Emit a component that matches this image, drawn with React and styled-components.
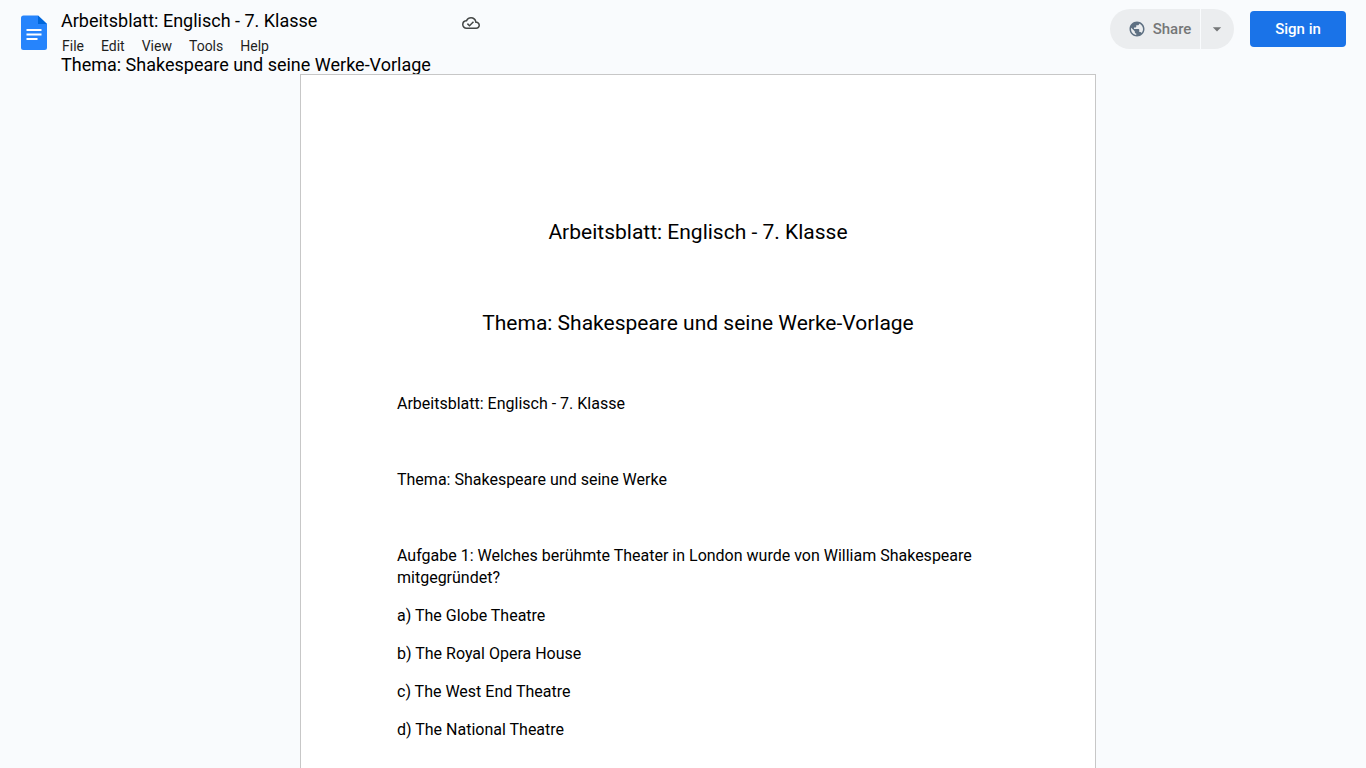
import React from 'react';
import styled, { createGlobalStyle } from 'styled-components';
import { MdArrowDropDown, MdOutlineCloudDone, MdPublic } from 'react-icons/md';

const GlobalStyle = createGlobalStyle`
* {
  box-sizing: border-box;
}
body {
  margin: 0;
  background-color: #f9fbfd;
  font-family: Roboto, sans-serif;
  color: #000;
}
`;
const Container = styled.div`
height: 100vh;
display: flex;
flex-direction: column;
overflow: hidden;
`;
const Header = styled.header`
display: flex;
align-items: flex-start;
flex: none;
height: 74px;
padding: 0 20px;
overflow: hidden;
`;
const Logo = styled.a`
display: flex;
flex: none;
width: 41px;
padding: 15px 0 0 1px;
`;
const TitleArea = styled.div`
flex: 1;
min-width: 0;
padding-top: 10px;
`;
const TitleRow = styled.div`
display: flex;
align-items: flex-end;
height: 22px;
color: #444746;
`;
const DocTitle = styled.h1`
width: 401px;
margin: 0;
font-size: 18px;
font-weight: 400;
line-height: 22px;
color: #000;
`;
const DocSubtitle = styled.p`
margin: 0;
font-size: 18px;
line-height: 22px;
white-space: nowrap;
`;
const Menu = styled.nav`
display: flex;
gap: 17px;
padding: 6px 1px 0;
`;
const MenuButton = styled.button`
padding: 0;
border: none;
background: none;
font-family: inherit;
font-size: 14px;
line-height: 16px;
color: #1f1f1f;
cursor: pointer;
`;
const Actions = styled.div`
display: flex;
align-items: center;
gap: 16px;
padding-top: 9px;
`;
const ShareGroup = styled.div`
display: flex;
gap: 1px;
height: 40px;
`;
const ShareButton = styled.button`
display: flex;
align-items: center;
justify-content: center;
gap: 7px;
width: ${(props) => (props.$arrow ? '33px' : '90px')};
padding: ${(props) => (props.$arrow ? '0 2px 0 0' : '0 0 0 9px')};
border: none;
border-radius: ${(props) => (props.$arrow ? '0 20px 20px 0' : '20px 0 0 20px')};
background-color: #ebedef;
font-family: inherit;
font-size: 15px;
font-weight: 500;
color: #757778;
`;
const GlobeIcon = styled(MdPublic)`
flex: none;
color: #5f7183;
`;
const SignIn = styled.a`
width: 96px;
border-radius: 4px;
background-color: #1a73e8;
font-size: 15px;
font-weight: 500;
line-height: 36px;
text-align: center;
text-decoration: none;
color: #fff;
`;
const Canvas = styled.main`
flex: 1;
min-height: 0;
padding-left: 30px;
overflow: hidden;
`;
const Page = styled.article`
max-width: 796px;
min-height: 100vh;
margin: 0 auto;
padding: 142px 96px 96px;
border: 1px solid #c7c7c7;
background-color: #fff;
`;
const Heading = styled.h2`
margin: 0 0 61px;
font-size: 21px;
font-weight: 400;
line-height: 30px;
text-align: center;

&:nth-of-type(2) {
  margin-bottom: 55px;
}
`;
const Paragraph = styled.p`
min-height: 22px;
margin: 0 0 16px;
font-size: 16px;
line-height: 22px;
`;

const menuItems = ['File', 'Edit', 'View', 'Tools', 'Help'];

// empty strings are the blank lines of the document
const paragraphs = [
  'Arbeitsblatt: Englisch - 7. Klasse',
  '',
  'Thema: Shakespeare und seine Werke',
  '',
  'Aufgabe 1: Welches berühmte Theater in London wurde von William Shakespeare mitgegründet?',
  'a) The Globe Theatre',
  'b) The Royal Opera House',
  'c) The West End Theatre',
  'd) The National Theatre',
];

const DocsLogo = () => (
  <svg width="26" height="35" viewBox="0 0 26 35" aria-hidden="true">
    <path d="M2.5 .5H17L26 9v23.5a2.500 2.500 0 0 1-2.500 2.500h-21A2.500 2.500 0 0 1 0 32.500V3A2.500 2.500 0 0 1 2.500 .5z" fill="#2684fc" />
    <path d="M17 .5L26 9H17z" fill="#0066da" />
    <path d="M5.500 14h15v2h-15zM5.500 18.500h15v2h-15zM5.500 23h11v2h-11z" fill="#fff" />
  </svg>
);

const App = () => {
  return (
    <>
      <GlobalStyle />
      <Container>
        <Header>
          <Logo href="#" aria-label="Docs home">
            <DocsLogo />
          </Logo>
          <TitleArea>
            <TitleRow>
              <DocTitle>Arbeitsblatt: Englisch - 7. Klasse</DocTitle>
              <MdOutlineCloudDone size={18} />
            </TitleRow>
            <Menu>
              {menuItems.map((item) => (
                <MenuButton key={item} type="button">{item}</MenuButton>
              ))}
            </Menu>
            <DocSubtitle>Thema: Shakespeare und seine Werke-Vorlage</DocSubtitle>
          </TitleArea>
          <Actions>
            <ShareGroup>
              <ShareButton type="button">
                <GlobeIcon size={18} />
                Share
              </ShareButton>
              <ShareButton type="button" $arrow aria-label="Share options">
                <MdArrowDropDown size={20} />
              </ShareButton>
            </ShareGroup>
            <SignIn href="#">Sign in</SignIn>
          </Actions>
        </Header>
        <Canvas>
          <Page>
            <Heading>Arbeitsblatt: Englisch - 7. Klasse</Heading>
            <Heading>Thema: Shakespeare und seine Werke-Vorlage</Heading>
            {paragraphs.map((text, index) => (
              <Paragraph key={index}>{text}</Paragraph>
            ))}
          </Page>
        </Canvas>
      </Container>
    </>
  );
};

export default App;
